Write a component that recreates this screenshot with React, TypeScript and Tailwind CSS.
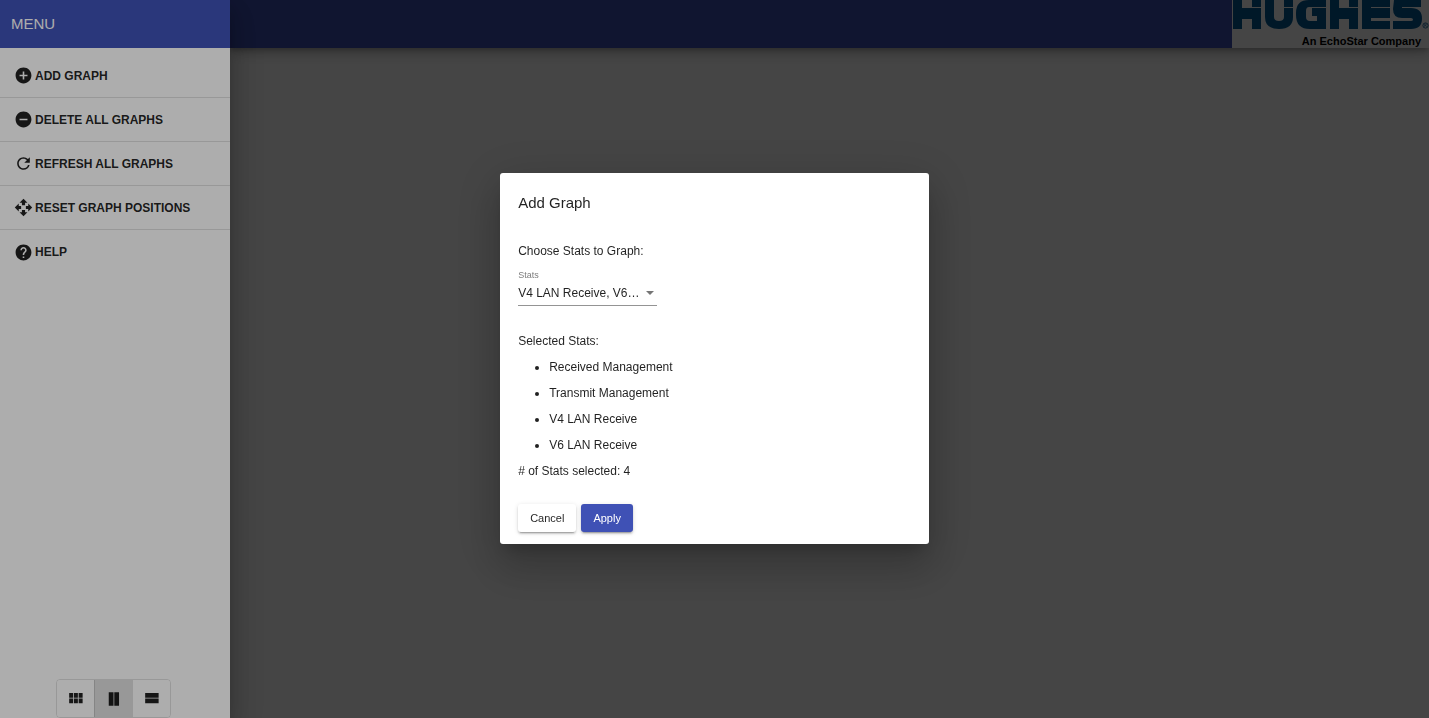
import React, { useState } from "react";
import { MdAddCircle, MdRemoveCircle, MdRefresh, MdOpenWith, MdHelp } from "react-icons/md";

const actions = [
  { label: "ADD GRAPH", Icon: MdAddCircle },
  { label: "DELETE ALL GRAPHS", Icon: MdRemoveCircle },
  { label: "REFRESH ALL GRAPHS", Icon: MdRefresh },
  { label: "RESET GRAPH POSITIONS", Icon: MdOpenWith },
  { label: "HELP", Icon: MdHelp },
];

const views = [
  {
    label: "Grid view",
    path: "M4 11h5V5H4v6zm0 7h5v-6H4v6zm6 0h5v-6h-5v6zm6 0h5v-6h-5v6zm-6-7h5V5h-5v6zm6-6v6h5V5h-5z",
  },
  { label: "Column view", path: "M6 4v17h6V4H6zM13 4v17h6V4h-6z" },
  { label: "Row view", path: "M4 18h17v-6H4v6zM4 5v6h17V5H4z" },
];

const selected = ["Received Management", "Transmit Management", "V4 LAN Receive", "V6 LAN Receive"];

function Logo() {
  return (
    <div className="flex h-12 w-[197px] flex-col bg-white">
      <svg viewBox="0 0 197 34" className="h-[34px] w-full" role="img" aria-label="Hughes">
        <g fill="#005b97">
          <path d="M1 0h9v8h19v21h-9V19H10v10H1zM20 0h9v7h-9z" />
          <path d="M33 0h9v17q0 4 5 4t5-4V8h9v9q0 12-14 12T33 17zM52 0h9v7h-9z" />
          <path d="M77 0h17v7H77q-3 0-3 4v6q0 4 4 4h7v-5h-5V8h14v21H78Q64 29 64 15v-2Q64 0 77 0z" />
          <path d="M98 0h9v8h19v21h-9V19h-10v10h-9zM117 0h9v7h-9z" />
          <path d="M130 0h28v7h-19v1h19v10h-19v3h19v8h-28z" />
          <path d="M162 0h27v7h-19v1h9q11 0 11 10.500T179 29h-18v-8h18q2 0 2-1.500T179 18h-9q-9 0-9-9z" />
        </g>
        <circle cx="193.500" cy="25.500" r="2.600" fill="none" stroke="#005b97" strokeWidth="0.800" />
        <path d="M192.700 27v-3h1.200q1 .8 0 1.500h-1.200m1 0l1 1.500" fill="none" stroke="#005b97" strokeWidth="0.500" />
      </svg>
      <span className="pr-2 text-right text-[11px] leading-[14px] font-bold text-black">An EchoStar Company</span>
    </div>
  );
}

export default function App() {
  const [view, setView] = useState(1);
  return (
    <div className="flex min-h-screen bg-white font-['Liberation_Sans',Arial,sans-serif] text-xs text-[rgba(0,0,0,0.87)]">
      <aside className="z-10 flex w-[230px] shrink-0 flex-col bg-white shadow-[0_8px_10px_-5px_rgba(0,0,0,0.2),0_16px_24px_2px_rgba(0,0,0,0.14),0_6px_30px_5px_rgba(0,0,0,0.12)]">
        <h2 className="flex h-12 items-center bg-[#3f51b5] px-[11px] text-[15px] font-normal text-white">MENU</h2>
        <nav className="flex flex-col pt-1.5">
          {actions.map(({ label, Icon }) => (
            <button
              key={label}
              type="button"
              className="flex h-11 items-center gap-0.5 border-b border-black/12 pl-3.5 font-bold whitespace-nowrap last:border-b-0"
            >
              <Icon size={19} />
              <span>{label}</span>
            </button>
          ))}
        </nav>
        <div className="mt-auto ml-14 flex w-[115px] overflow-hidden rounded border border-black/12">
          {views.map((v, i) => (
            <button
              key={v.label}
              type="button"
              aria-label={v.label}
              aria-pressed={view === i}
              onClick={() => setView(i)}
              className={
                "flex h-[37px] flex-1 items-center justify-center border-l border-black/12 first:border-l-0 " +
                (view === i ? "bg-[#e0e0e0]" : "bg-white")
              }
            >
              <svg viewBox="0 0 24 24" className="size-[19px]" fill="currentColor" aria-hidden="true">
                <path d={v.path} />
              </svg>
            </button>
          ))}
        </div>
      </aside>
      <main className="relative min-w-0 flex-1">
        <header className="flex h-12 justify-end bg-[#3f51b5] shadow-[0_3px_5px_-1px_rgba(0,0,0,0.2),0_6px_10px_rgba(0,0,0,0.14),0_1px_18px_rgba(0,0,0,0.12)]">
          <Logo />
        </header>
        <div className="absolute inset-0 bg-black/60" />
      </main>

      <div className="fixed inset-0 z-20 flex items-center justify-center bg-black/32 pb-px">
        <section
          role="dialog"
          aria-modal="true"
          aria-labelledby="dialog-title"
          className="flex w-[30%] flex-col rounded-[3px] bg-white px-[18px] pt-[18px] pb-3 shadow-[0_11px_15px_-7px_rgba(0,0,0,0.2),0_24px_38px_3px_rgba(0,0,0,0.14),0_9px_46px_8px_rgba(0,0,0,0.12)]"
        >
          <h1 id="dialog-title" className="text-[15px] leading-6 font-normal">Add Graph</h1>
          <p className="mt-6 leading-6">Choose Stats to Graph:</p>
          <div className="mt-1 flex w-[139px] flex-col border-b border-black/42 pb-0.5">
            <label htmlFor="stats" className="text-[9px] leading-4 text-black/54">Stats</label>
            <div className="flex items-center">
              <select id="stats" className="min-w-0 flex-1 appearance-none truncate bg-transparent leading-5">
                <option>V4 LAN Receive, V6 LAN Receive, Received Management, Transmit Management</option>
              </select>
              <svg viewBox="0 0 10 5" className="mr-[3px] ml-1.5 h-1 w-2" fill="rgba(0,0,0,0.54)" aria-hidden="true">
                <path d="M0 0h10L5 5z" />
              </svg>
            </div>
          </div>
          <p className="mt-[22px] leading-[26px]">Selected Stats:</p>
          <ul className="list-disc pl-[31px]">
            {selected.map((s) => (
              <li key={s} className="leading-[26px]">{s}</li>
            ))}
          </ul>
          <p className="leading-[26px]"># of Stats selected: {selected.length}</p>
          <div className="mt-5 flex gap-[5px] text-[11px]">
            <button type="button" className="h-7 rounded-[3px] bg-white px-3 shadow-[0_3px_1px_-2px_rgba(0,0,0,0.2),0_2px_2px_rgba(0,0,0,0.14),0_1px_5px_rgba(0,0,0,0.12)]">
              Cancel
            </button>
            <button type="button" className="h-7 rounded-[3px] bg-[#3f51b5] px-3 text-white shadow-[0_3px_1px_-2px_rgba(0,0,0,0.2),0_2px_2px_rgba(0,0,0,0.14),0_1px_5px_rgba(0,0,0,0.12)]">
              Apply
            </button>
          </div>
        </section>
      </div>
    </div>
  );
}
